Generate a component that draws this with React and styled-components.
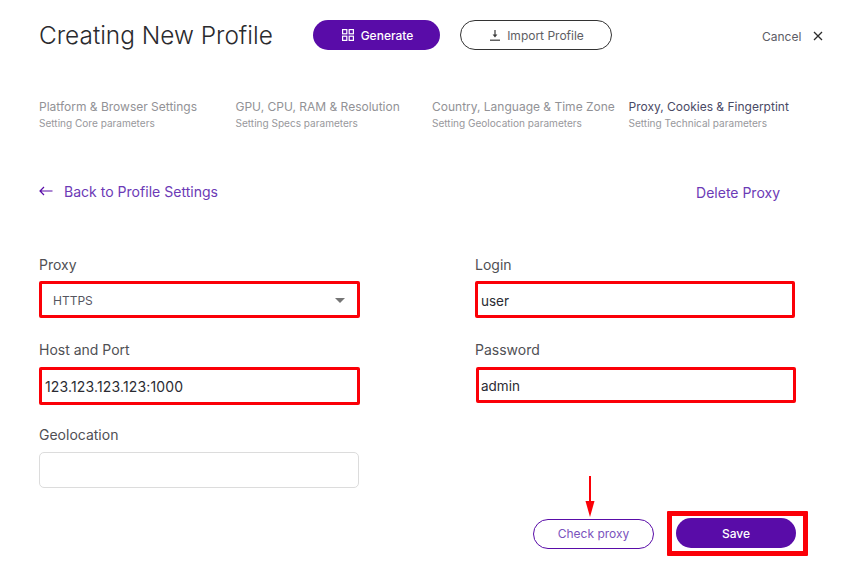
import React from "react";
import styled, { createGlobalStyle } from "styled-components";

const Global = createGlobalStyle`
  html, body { margin: 0; padding: 0; background: #fff; }
  body { font-family: Inter, "Liberation Sans", sans-serif; color: #2f2f33; }
`;

const purple = "#590ca8";
const red = "#fb0007";

const Page = styled.div`
  width: 844px;
  height: 575px;
  box-sizing: border-box;
  padding: 20px 0 0 39px;
  overflow: hidden;
`;

const Header = styled.header`
  display: flex;
  align-items: center;
  height: 30px;
`;

const Title = styled.h1`
  margin: 0 41px 0 0;
  width: 233px;
  white-space: nowrap;
  font-size: 24.4px;
  line-height: 30px;
  font-weight: 300;
  color: #2a2a2e;
`;

const PillButton = styled.button`
  box-sizing: border-box;
  display: flex;
  align-items: center;
  justify-content: center;
  gap: ${(p) => p.$gap || 0}px;
  width: ${(p) => p.$w}px;
  height: 30px;
  margin: 0;
  padding: 0 0 0 ${(p) => p.$pad || 0}px;
  border-radius: 15px;
  font-family: inherit;
  font-size: 12px;
  font-weight: ${(p) => (p.$variant === "solid" ? 500 : 400)};
  background: ${(p) => (p.$variant === "solid" ? purple : "#fff")};
  color: ${(p) =>
    p.$variant === "solid" ? "#fff" : p.$variant === "accent" ? "#7a52bd" : "#5e5e63"};
  border: ${(p) =>
    p.$variant === "solid"
      ? "none"
      : p.$variant === "accent"
      ? `1px solid ${purple}`
      : "1px solid #333"};
`;

const ImportWrap = styled.div`
  margin-left: 20px;
`;

const CancelGroup = styled.div`
  margin-left: 150px;
  display: flex;
  align-items: center;
  gap: 12px;
  font-size: 12px;
  color: #5c5c66;
  padding-top: 2px;
`;

const Steps = styled.nav`
  display: grid;
  grid-template-columns: repeat(4, 196.5px);
  margin-top: 49px;
`;

const Step = styled.div`
  white-space: nowrap;
`;

const StepTitle = styled.div`
  font-size: 12px;
  line-height: 15px;
  color: ${(p) => (p.$active ? "#4a4a66" : "#929296")};
`;

const StepSub = styled.div`
  font-size: 10.05px;
  line-height: 12px;
  margin-top: 3px;
  color: #98989c;
`;

const LinkRow = styled.div`
  display: flex;
  justify-content: space-between;
  align-items: center;
  width: 741px;
  margin-top: 52px;
  height: 20px;
`;

const BackLink = styled.a`
  display: flex;
  align-items: center;
  gap: 11px;
  font-size: 14.05px;
  color: #6c3ab6;
`;

const DeleteLink = styled.a`
  font-size: 14px;
  color: #6c3ab6;
  padding-top: 2px;
`;

const Form = styled.div`
  display: grid;
  grid-template-columns: 320px 321px;
  column-gap: 116px;
  margin-top: 56px;
`;

const Column = styled.div`
  display: flex;
  flex-direction: column;
`;

const Group = styled.div`
  height: 85px;
`;

const Label = styled.div`
  font-size: 14px;
  line-height: 16px;
  color: #505054;
  margin-bottom: 9px;
`;

const Field = styled.div`
  box-sizing: border-box;
  display: flex;
  align-items: center;
  justify-content: space-between;
  width: ${(p) => p.$w || 320}px;
  height: ${(p) => p.$h || 37}px;
  padding: ${(p) => (p.$numeric ? 0 : 2)}px ${(p) => (p.$select ? 12 : 3)}px 0 ${(p) => (p.$select ? 11 : p.$tight ? 2 : 3)}px;
  margin-left: ${(p) => p.$shift || 0}px;
  margin-top: ${(p) => (p.$lift ? -1 : 0)}px;
  border-radius: ${(p) => (p.$plain ? 5 : 2)}px;
  border: ${(p) => (p.$plain ? "1px solid #dcdcdc" : `3px solid ${red}`)};
  font-size: ${(p) => (p.$select ? 12 : p.$numeric ? 14 : 13.5)}px;
  letter-spacing: ${(p) => (p.$numeric ? 0.15 : 0)}px;
  color: ${(p) => (p.$select ? "#55555f" : "#2b2b33")};
`;

const Caret = styled.span`
  width: 0;
  height: 0;
  border-left: 5px solid transparent;
  border-right: 5px solid transparent;
  border-top: 5px solid #757575;
`;

const Actions = styled.div`
  display: flex;
  align-items: center;
  margin: -1px 0 0 494px;
`;

const ArrowMark = styled.svg`
  position: absolute;
  left: 50%;
  top: -43px;
  margin-left: -10px;
`;

const CheckWrap = styled.div`
  position: relative;
  margin-right: 13px;
`;

const SaveBox = styled.div`
  box-sizing: border-box;
  width: 141px;
  height: 45px;
  border: 5px solid ${red};
  border-radius: 1px;
  padding: 2px 0 0 4px;
`;

export default function App() {
  return (
    <Page>
      <Global />
      <Header>
        <Title>Creating New Profile</Title>
        <PillButton $variant="solid" $w={127} $gap={7} $pad={2}>
          <svg width="12" height="12" viewBox="0 0 12 12" fill="none" stroke="#fff" strokeWidth="1.2">
            <rect x="0.6" y="0.6" width="4.2" height="4.2" />
            <rect x="7.2" y="0.6" width="4.2" height="4.2" />
            <rect x="0.6" y="7.2" width="4.2" height="4.2" />
            <rect x="7.2" y="7.2" width="4.2" height="4.2" />
          </svg>
          Generate
        </PillButton>
        <ImportWrap>
          <PillButton $w={152} $gap={7} $pad={2}>
            <svg width="10" height="11" viewBox="0 0 10 11" fill="none">
              <path d="M5 0V6" stroke="#3a3a3a" strokeWidth="1.2" />
              <path d="M2.6 4.6h4.8L5 7.6z" fill="#3a3a3a" />
              <path d="M0 10.2h10" stroke="#3a3a3a" strokeWidth="1.2" />
            </svg>
            Import Profile
          </PillButton>
        </ImportWrap>
        <CancelGroup>
          Cancel
          <svg width="10" height="10" viewBox="0 0 10 10" fill="none" stroke="#2b2b2b" strokeWidth="1.3">
            <path d="M1 1l8 8M9 1l-8 8" />
          </svg>
        </CancelGroup>
      </Header>

      <Steps>
        <Step>
          <StepTitle>Platform &amp; Browser Settings</StepTitle>
          <StepSub>Setting Core parameters</StepSub>
        </Step>
        <Step>
          <StepTitle>GPU, CPU, RAM &amp; Resolution</StepTitle>
          <StepSub>Setting Specs parameters</StepSub>
        </Step>
        <Step>
          <StepTitle>Country, Language &amp; Time Zone</StepTitle>
          <StepSub>Setting Geolocation parameters</StepSub>
        </Step>
        <Step>
          <StepTitle $active>Proxy, Cookies &amp; Fingerptint</StepTitle>
          <StepSub>Setting Technical parameters</StepSub>
        </Step>
      </Steps>

      <LinkRow>
        <BackLink>
          <svg width="14" height="10" viewBox="0 0 14 10" fill="none" stroke={purple} strokeWidth="1.2">
            <path d="M13.5 5H1M5 1L1 5l4 4" />
          </svg>
          Back to Profile Settings
        </BackLink>
        <DeleteLink>Delete Proxy</DeleteLink>
      </LinkRow>

      <Form>
        <Column>
          <Group>
            <Label>Proxy</Label>
            <Field $select $w={321} $lift>
              HTTPS
              <Caret />
            </Field>
          </Group>
          <Group>
            <Label>Host and Port</Label>
            <Field $h={38} $w={321} $numeric>123.123.123.123:1000</Field>
          </Group>
          <Group>
            <Label>Geolocation</Label>
            <Field $plain $h={36} />
          </Group>
        </Column>
        <Column>
          <Group>
            <Label>Login</Label>
            <Field $lift>user</Field>
          </Group>
          <Group>
            <Label>Password</Label>
            <Field $shift={1} $h={36} $tight>admin</Field>
          </Group>
        </Column>
      </Form>

      <Actions>
        <CheckWrap>
          <ArrowMark width="12" height="42" viewBox="0 0 12 42">
            <path d="M6 0v30" stroke={red} strokeWidth="2" />
            <path d="M1.5 25h9L6 41z" fill={red} />
          </ArrowMark>
          <PillButton $variant="accent" $w={121}>Check proxy</PillButton>
        </CheckWrap>
        <SaveBox>
          <PillButton $variant="solid" $w={120}>Save</PillButton>
        </SaveBox>
      </Actions>
    </Page>
  );
}
